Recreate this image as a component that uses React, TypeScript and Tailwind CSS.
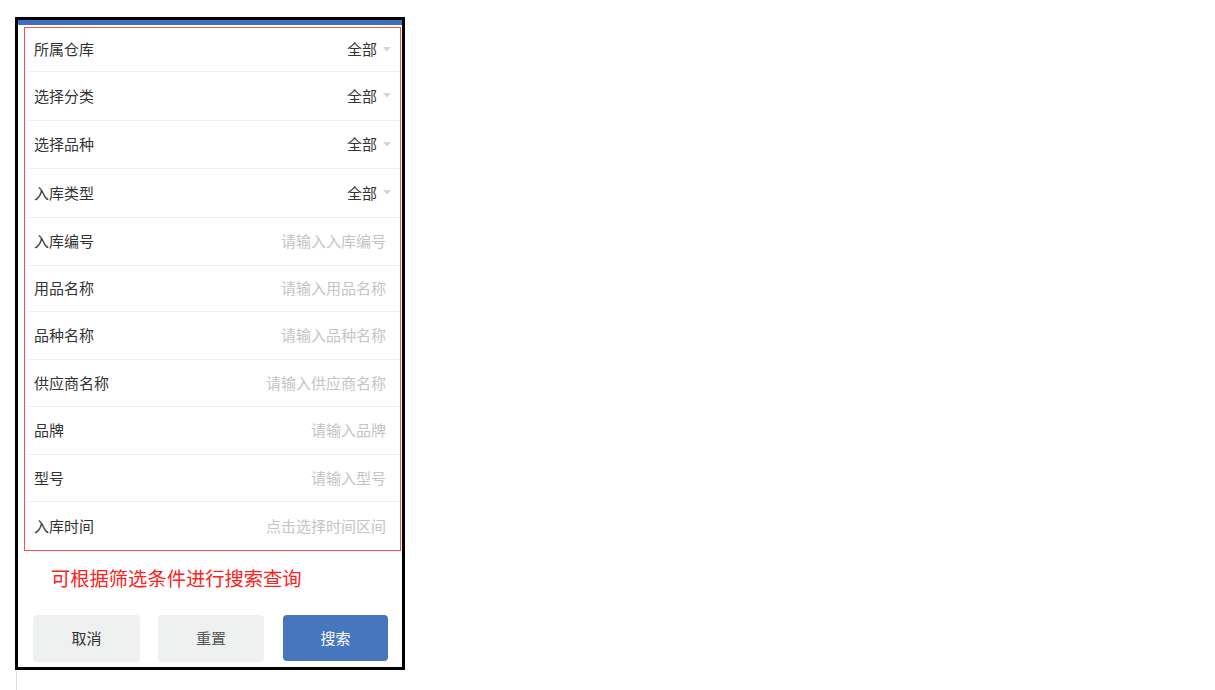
import * as React from "react";

type Row = { label: string; value?: string; placeholder?: string; h: string };

const ROWS: Row[] = [
  { label: "所属仓库", value: "全部", h: "h-[44px]" },
  { label: "选择分类", value: "全部", h: "h-[48.5px]" },
  { label: "选择品种", value: "全部", h: "h-[48.5px]" },
  { label: "入库类型", value: "全部", h: "h-[48.5px]" },
  { label: "入库编号", placeholder: "请输入入库编号", h: "h-[48px]" },
  { label: "用品名称", placeholder: "请输入用品名称", h: "h-[46.5px]" },
  { label: "品种名称", placeholder: "请输入品种名称", h: "h-[48px]" },
  { label: "供应商名称", placeholder: "请输入供应商名称", h: "h-[47px]" },
  { label: "品牌", placeholder: "请输入品牌", h: "h-[48px]" },
  { label: "型号", placeholder: "请输入型号", h: "h-[47px]" },
  { label: "入库时间", placeholder: "点击选择时间区间", h: "h-[48px]" },
];

function Caret() {
  return (
    <svg width="8" height="5" viewBox="0 0 8 5" className="ml-[6px]">
      <path d="M0 0 L8 0 L4 4.5 Z" fill="#d4d4d4" />
    </svg>
  );
}

export default function App() {
  return (
    <div
      className="relative h-[690px] w-[1215px] bg-white"
      style={{ fontFamily: '"Noto Sans CJK SC", "Noto Sans", sans-serif' }}
    >
      <div className="pl-[15px] pt-[17px]">
        <div className="flex h-[653px] w-[390px] flex-col border-[3px] border-black bg-white">
          <div className="h-[5px] bg-[#3b70c2]" />

          <div className="ml-[6px] mr-[1px] mt-[2px] border border-[#f4524a]">
            {ROWS.map((r, i) => (
              <div
                key={r.label}
                className={
                  "ml-[3px] flex items-center justify-between border-[#f0f0f0] pl-[6px] pr-[14px] " +
                  r.h +
                  (i === ROWS.length - 1 ? "" : " border-b")
                }
              >
                <span className="text-[15px] text-[#333]">{r.label}</span>
                {r.value ? (
                  <span className="-mr-[5px] flex items-center text-[15px] text-[#333]">
                    {r.value}
                    <Caret />
                  </span>
                ) : (
                  <span className="text-[15px] text-[#c4c4c4]">{r.placeholder}</span>
                )}
              </div>
            ))}
          </div>

          <div className="pl-[33px] pt-[12px] text-[19.3px] leading-[30px] text-[#ff2020]">
            可根据筛选条件进行搜索查询
          </div>

          <div className="mt-[22px] flex gap-[18px] pl-[15px] pr-[12px]">
            <button className="h-[47px] w-[107px] rounded-[4px] bg-[#eff0f0] text-[15px] text-[#333]">
              取消
            </button>
            <button className="h-[47px] w-[106px] rounded-[4px] bg-[#eff0f0] text-[15px] text-[#555]">
              重置
            </button>
            <button className="ml-[1px] h-[46px] w-[105px] rounded-[4px] bg-[#4676be] text-[15px] text-white">
              搜索
            </button>
          </div>
        </div>
      </div>
      <div className="ml-[16px] mt-px h-[19px] w-px bg-[#dcdcdc]" />
    </div>
  );
}
